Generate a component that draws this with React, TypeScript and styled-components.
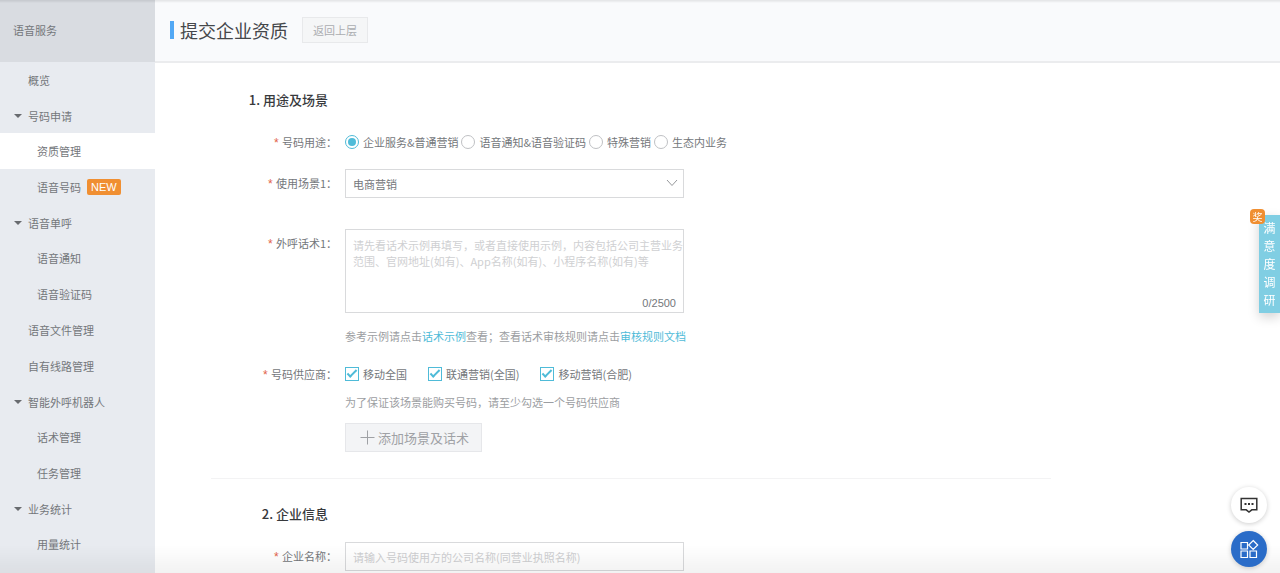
import React from "react";
import styled, { createGlobalStyle, css } from "styled-components";

const color = {
  text: "#74777b",
  muted: "#9c9ea2",
  border: "#d9dadc",
  accent: "#4fbbd8",
  orange: "#f08f32",
};

const GlobalStyle = createGlobalStyle`
  *, *::before, *::after { box-sizing: border-box; }
  body {
    margin: 0;
    background: #fff;
    color: ${color.text};
    font-family: "Noto Sans CJK SC", sans-serif;
    font-size: 11px;
    line-height: 16px;
  }
  button, input, select, textarea { font: inherit; color: inherit; margin: 0; }
  ul { list-style: none; margin: 0; padding: 0; }
  h1, h2, p { margin: 0; }
  a { text-decoration: none; color: inherit; }
`;

const Layout = styled.div`
  display: flex;
  min-height: 100vh;
`;

const Sidebar = styled.nav`
  flex: 0 0 155px;
  background: #e8ebf0;
`;

const SidebarTitle = styled.div`
  height: 62px;
  line-height: 60px;
  padding-left: 13px;
  background: #d9dce1;
`;

const MenuLink = styled.a<{ $level: "top" | "group" | "sub"; $active?: boolean }>`
  display: flex;
  align-items: center;
  gap: 6px;
  height: ${(p) => (p.$level === "group" ? 35 : 36)}px;
  padding-left: ${(p) => ({ top: 28, group: 14, sub: 37 })[p.$level]}px;
  ${(p) => p.$active && css`background: #fff;`}
`;

const Caret = styled.span`
  border: 4px solid transparent;
  border-top: 4px solid #686b6f;
  border-bottom: 0;
`;

const NewTag = styled.span`
  padding: 0 4px;
  border-radius: 2px;
  background: ${color.orange};
  color: #fff;
  font-family: "Liberation Sans", sans-serif;
`;

const Main = styled.main`
  flex: 1;
  min-width: 0;
`;

const Header = styled.header`
  display: flex;
  align-items: center;
  gap: 14px;
  height: 63px;
  padding: 0 0 1px 15px;
  background: #f9fafc;
  border-bottom: 2px solid #ebecee;
`;

const PageTitle = styled.h1`
  display: flex;
  align-items: center;
  gap: 6px;
  font-size: 18px;
  font-weight: 400;
  line-height: 24px;
  color: #45474b;
  &::before {
    content: "";
    width: 4px;
    height: 18px;
    background: #52a8f5;
  }
`;

const BackButton = styled.button`
  height: 26px;
  padding: 0 10px;
  border: 1px solid #e8e9eb;
  background: #f5f6f7;
  color: #abadb0;
`;

const Form = styled.form`
  max-width: 896px;
  padding-left: 56px;
`;

const Section = styled.section<{ $divided?: boolean }>`
  padding: ${(p) => (p.$divided ? "25px 0 0" : "27px 0 26px")};
  ${(p) => p.$divided && css`border-top: 1px solid #f3f3f4;`}
`;

const SectionTitle = styled.h2`
  width: 117px;
  margin-bottom: 18px;
  font-size: 13px;
  line-height: 20px;
  font-weight: 500;
  text-align: right;
  color: #37393c;
`;

const Row = styled.div<{ $gap?: number }>`
  display: grid;
  grid-template-columns: 126px 1fr;
  column-gap: 8px;
  margin-top: ${(p) => p.$gap ?? 0}px;
`;

const RowLabel = styled.label`
  line-height: 28px;
  text-align: right;
  &::before {
    content: "* ";
    color: #e2624a;
    font-family: "Liberation Sans", sans-serif;
    font-size: 12px;
    line-height: 12px;
  }
`;

const Options = styled.div<{ $gap: number }>`
  display: flex;
  align-items: center;
  gap: ${(p) => p.$gap}px;
  height: 28px;
`;

const Option = styled.label`
  display: flex;
  align-items: center;
  gap: 4px;
  white-space: nowrap;
`;

const Radio = styled.input`
  appearance: none;
  display: grid;
  place-items: center;
  width: 14px;
  height: 14px;
  border: 1px solid #bfc1c4;
  border-radius: 50%;
  background: #fff;
  &:checked { border-color: ${color.accent}; }
  &:checked::before {
    content: "";
    width: 8px;
    height: 8px;
    border-radius: 50%;
    background: ${color.accent};
  }
`;

const Checkbox = styled.input`
  appearance: none;
  display: grid;
  place-items: center;
  width: 14px;
  height: 14px;
  border: 1px solid ${color.accent};
  background: #fff;
  &:checked::before {
    content: "";
    width: 10px;
    height: 5px;
    margin-bottom: 3px;
    border: solid ${color.accent};
    border-width: 0 0 2px 2px;
    transform: rotate(-45deg);
  }
`;

const Field = styled.div`
  position: relative;
  max-width: 339px;
`;

const fieldBox = css`
  display: block;
  width: 100%;
  border: 1px solid ${color.border};
  border-radius: 0;
  background: #fff;
  outline: none;
  &::placeholder { color: #cfd0d2; opacity: 1; }
`;

const Select = styled.select`
  ${fieldBox}
  appearance: none;
  height: 29px;
  padding: 0 28px 0 7px;
`;

const TextInput = styled.input`
  ${fieldBox}
  height: 29px;
  padding: 0 7px;
`;

const TextArea = styled.textarea`
  ${fieldBox}
  height: 84px;
  padding: 7px 0 7px 7px;
  resize: none;
  overflow: hidden;
`;

const Chevron = styled.svg`
  position: absolute;
  right: 6px;
  top: 10px;
  pointer-events: none;
`;

const Counter = styled.span`
  position: absolute;
  right: 8px;
  bottom: 2px;
  font-family: "Liberation Sans", sans-serif;
`;

const Hint = styled.p<{ $gap: number }>`
  margin-top: ${(p) => p.$gap}px;
  color: ${color.muted};
  a { color: ${color.accent}; }
`;

const AddButton = styled.button`
  display: flex;
  align-items: center;
  gap: 3px;
  height: 29px;
  margin-top: 13px;
  padding: 0 12px 0 14px;
  border: 1px solid #e6e7ea;
  background: #f3f4f6;
  color: #9fa1a5;
  font-size: 13px;
`;

const Survey = styled.button`
  position: fixed;
  right: 0;
  top: 215px;
  display: flex;
  justify-content: center;
  width: 21px;
  padding: 4px 0;
  border: 0;
  background: #80cee3;
  box-shadow: 0 4px 12px rgba(0, 0, 0, 0.18);
  color: #fff;
  font-size: 12px;
  line-height: 18px;
`;

const SurveyText = styled.span`
  width: 12px;
  word-break: break-all;
`;

const Prize = styled.span`
  position: absolute;
  left: -9px;
  top: -6px;
  width: 15px;
  height: 15px;
  border-radius: 4px;
  background: ${color.orange};
  font-size: 10px;
  line-height: 15px;
`;

const Floating = styled.div`
  position: fixed;
  right: 13px;
  bottom: 6px;
  z-index: 2;
  display: flex;
  flex-direction: column;
  gap: 8px;
`;

const RoundButton = styled.button<{ $primary?: boolean }>`
  display: grid;
  place-items: center;
  width: 36px;
  height: 36px;
  padding: 0;
  border: 0;
  border-radius: 50%;
  background: ${(p) => (p.$primary ? "#2a6cc8" : "#fff")};
  color: ${(p) => (p.$primary ? "#fff" : "#333")};
  box-shadow: 0 1px 5px rgba(0, 0, 0, 0.2);
`;

const EdgeShade = styled.div<{ $side: "top" | "bottom" }>`
  position: fixed;
  left: 0;
  right: 0;
  z-index: 1;
  pointer-events: none;
  ${(p) =>
    p.$side === "top"
      ? css`top: 0; height: 3px; background: linear-gradient(rgba(0, 0, 0, 0.09), transparent);`
      : css`bottom: 0; height: 28px; background: linear-gradient(transparent, rgba(0, 0, 0, 0.05));`}
`;

type Item = { text: string; level: "top" | "group" | "sub"; active?: boolean; isNew?: boolean };

const menu: Item[] = [
  { text: "概览", level: "top" },
  { text: "号码申请", level: "group" },
  { text: "资质管理", level: "sub", active: true },
  { text: "语音号码", level: "sub", isNew: true },
  { text: "语音单呼", level: "group" },
  { text: "语音通知", level: "sub" },
  { text: "语音验证码", level: "sub" },
  { text: "语音文件管理", level: "top" },
  { text: "自有线路管理", level: "top" },
  { text: "智能外呼机器人", level: "group" },
  { text: "话术管理", level: "sub" },
  { text: "任务管理", level: "sub" },
  { text: "业务统计", level: "group" },
  { text: "用量统计", level: "sub" },
];

const usages = ["企业服务&普通营销", "语音通知&语音验证码", "特殊营销", "生态内业务"];
const suppliers = ["移动全国", "联通营销(全国)", "移动营销(合肥)"];

export default function App() {
  return (
    <>
      <GlobalStyle />
      <Layout>
        <Sidebar>
          <SidebarTitle>语音服务</SidebarTitle>
          <ul>
            {menu.map((m) => (
              <li key={m.text}>
                <MenuLink href="#" $level={m.level} $active={m.active}>
                  {m.level === "group" && <Caret />}
                  {m.text}
                  {m.isNew && <NewTag>NEW</NewTag>}
                </MenuLink>
              </li>
            ))}
          </ul>
        </Sidebar>
        <Main>
          <Header>
            <PageTitle>提交企业资质</PageTitle>
            <BackButton type="button">返回上层</BackButton>
          </Header>
          <Form>
            <Section>
              <SectionTitle>1. 用途及场景</SectionTitle>
              <Row role="radiogroup" aria-labelledby="usage-label">
                <RowLabel as="span" id="usage-label">号码用途：</RowLabel>
                <Options $gap={3}>
                  {usages.map((u, i) => (
                    <Option key={u}>
                      <Radio type="radio" name="usage" defaultChecked={i === 0} />
                      {u}
                    </Option>
                  ))}
                </Options>
              </Row>
              <Row $gap={13}>
                <RowLabel htmlFor="scene">使用场景1：</RowLabel>
                <Field>
                  <Select id="scene">
                    <option>电商营销</option>
                  </Select>
                  <Chevron width="12" height="8" viewBox="0 0 12 8" fill="none" stroke="#96989b">
                    <path d="M1 1l5 5.5L11 1" />
                  </Chevron>
                </Field>
              </Row>
              <Row $gap={31}>
                <RowLabel htmlFor="script">外呼话术1：</RowLabel>
                <div>
                  <Field>
                    <TextArea
                      id="script"
                      placeholder="请先看话术示例再填写，或者直接使用示例，内容包括公司主营业务范围、官网地址(如有)、App名称(如有)、小程序名称(如有)等"
                    />
                    <Counter>0/2500</Counter>
                  </Field>
                  <Hint $gap={15}>
                    参考示例请点击<a href="#">话术示例</a>查看；查看话术审核规则请点击<a href="#">审核规则文档</a>
                  </Hint>
                </div>
              </Row>
              <Row $gap={16} role="group" aria-labelledby="supplier-label">
                <RowLabel as="span" id="supplier-label">号码供应商：</RowLabel>
                <div>
                  <Options $gap={21}>
                    {suppliers.map((s) => (
                      <Option key={s}>
                        <Checkbox type="checkbox" defaultChecked />
                        {s}
                      </Option>
                    ))}
                  </Options>
                  <Hint $gap={6}>为了保证该场景能购买号码，请至少勾选一个号码供应商</Hint>
                  <AddButton type="button">
                    <svg width="15" height="15" viewBox="0 0 15 15" stroke="currentColor" aria-hidden="true">
                      <path d="M7.500 0.500v14M0.500 7.500h14" />
                    </svg>
                    添加场景及话术
                  </AddButton>
                </div>
              </Row>
            </Section>
            <Section $divided>
              <SectionTitle>2. 企业信息</SectionTitle>
              <Row>
                <RowLabel htmlFor="company">企业名称：</RowLabel>
                <Field>
                  <TextInput id="company" placeholder="请输入号码使用方的公司名称(同营业执照名称)" />
                </Field>
              </Row>
            </Section>
          </Form>
        </Main>
      </Layout>
      <EdgeShade $side="top" />
      <EdgeShade $side="bottom" />
      <Survey type="button">
        <SurveyText>满意度调研</SurveyText>
        <Prize>奖</Prize>
      </Survey>
      <Floating>
        <RoundButton type="button" aria-label="在线咨询">
          <svg width="18" height="16" viewBox="0 0 18 16" fill="none" stroke="currentColor" strokeWidth="1.500">
            <path d="M1.200 1.500h15.600v11.300h-5L9 15l-2.800-2.200h-5z" />
            <path d="M4.500 7h2M8 7h2M11.500 7h2" strokeWidth="2" />
          </svg>
        </RoundButton>
        <RoundButton type="button" aria-label="应用" $primary>
          <svg width="20" height="20" viewBox="0 0 20 20" fill="none" stroke="currentColor" strokeWidth="1.200">
            <path d="M2 3.500h6.500v6.500H2zM2 12h6.500v6.500H2zM11 12h6.500v6.500H11zM14.200 1.500l4.500 4.500-4.500 4.500L9.700 6z" />
          </svg>
        </RoundButton>
      </Floating>
    </>
  );
}
